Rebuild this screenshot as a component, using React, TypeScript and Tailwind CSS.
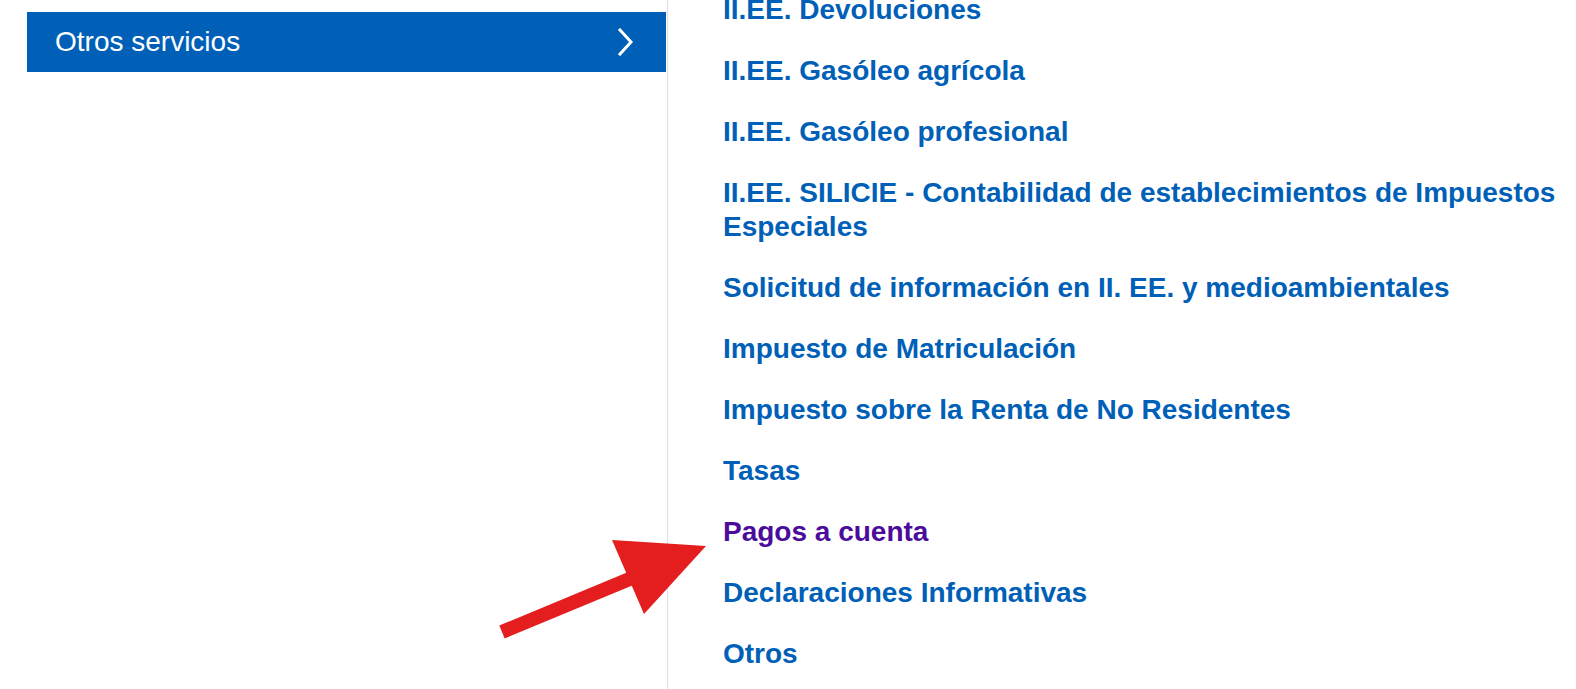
const links = [
  { label: 'II.EE. Devoluciones' },
  { label: 'II.EE. Gasóleo agrícola' },
  { label: 'II.EE. Gasóleo profesional' },
  { label: 'II.EE. SILICIE - Contabilidad de establecimientos de Impuestos Especiales' },
  { label: 'Solicitud de información en II. EE. y medioambientales' },
  { label: 'Impuesto de Matriculación' },
  { label: 'Impuesto sobre la Renta de No Residentes' },
  { label: 'Tasas' },
  { label: 'Pagos a cuenta', visited: true },
  { label: 'Declaraciones Informativas' },
  { label: 'Otros' },
];

export default function App() {
  return (
    <div
      className="relative flex h-[689px] w-full overflow-hidden bg-white"
      style={{ fontFamily: '"Liberation Sans", Arial, sans-serif' }}
    >
      {/* Menú lateral */}
      <div className="w-[667px] shrink-0 pl-[27px] pt-[12px]">
        <a
          href="#"
          className="flex h-[60px] w-[639px] items-center justify-between bg-[#005fb7] pl-[28px] pr-[32px] text-[28px] leading-[34px] text-white"
        >
          <span>Otros servicios</span>
          <svg width="16" height="28" viewBox="0 0 16 28" fill="none">
            <path d="M2 2 L13 14 L2 26" stroke="white" strokeWidth="3" strokeLinecap="square" />
          </svg>
        </a>
      </div>

      {/* Listado de servicios */}
      <div className="flex-1 border-l border-[#dcdee3] pl-[55px] pr-[16px]">
        <ul className="mt-[-7px] flex flex-col gap-[27px]">
          {links.map((link) => (
            <li key={link.label}>
              <a
                href="#"
                className={`text-[28px] font-bold leading-[34px] ${link.visited ? 'text-[#4b0c9c]' : 'text-[#005fb7]'}`}
              >
                {link.label}
              </a>
            </li>
          ))}
        </ul>
      </div>

      {/* Flecha de anotación */}
      <svg className="pointer-events-none absolute left-0 top-0" width="1576" height="689">
        <line x1="502" y1="632" x2="632" y2="578" stroke="#e41e1e" strokeWidth="14" />
        <polygon points="612,540 706,546 644,614" fill="#e41e1e" />
      </svg>
    </div>
  );
}
